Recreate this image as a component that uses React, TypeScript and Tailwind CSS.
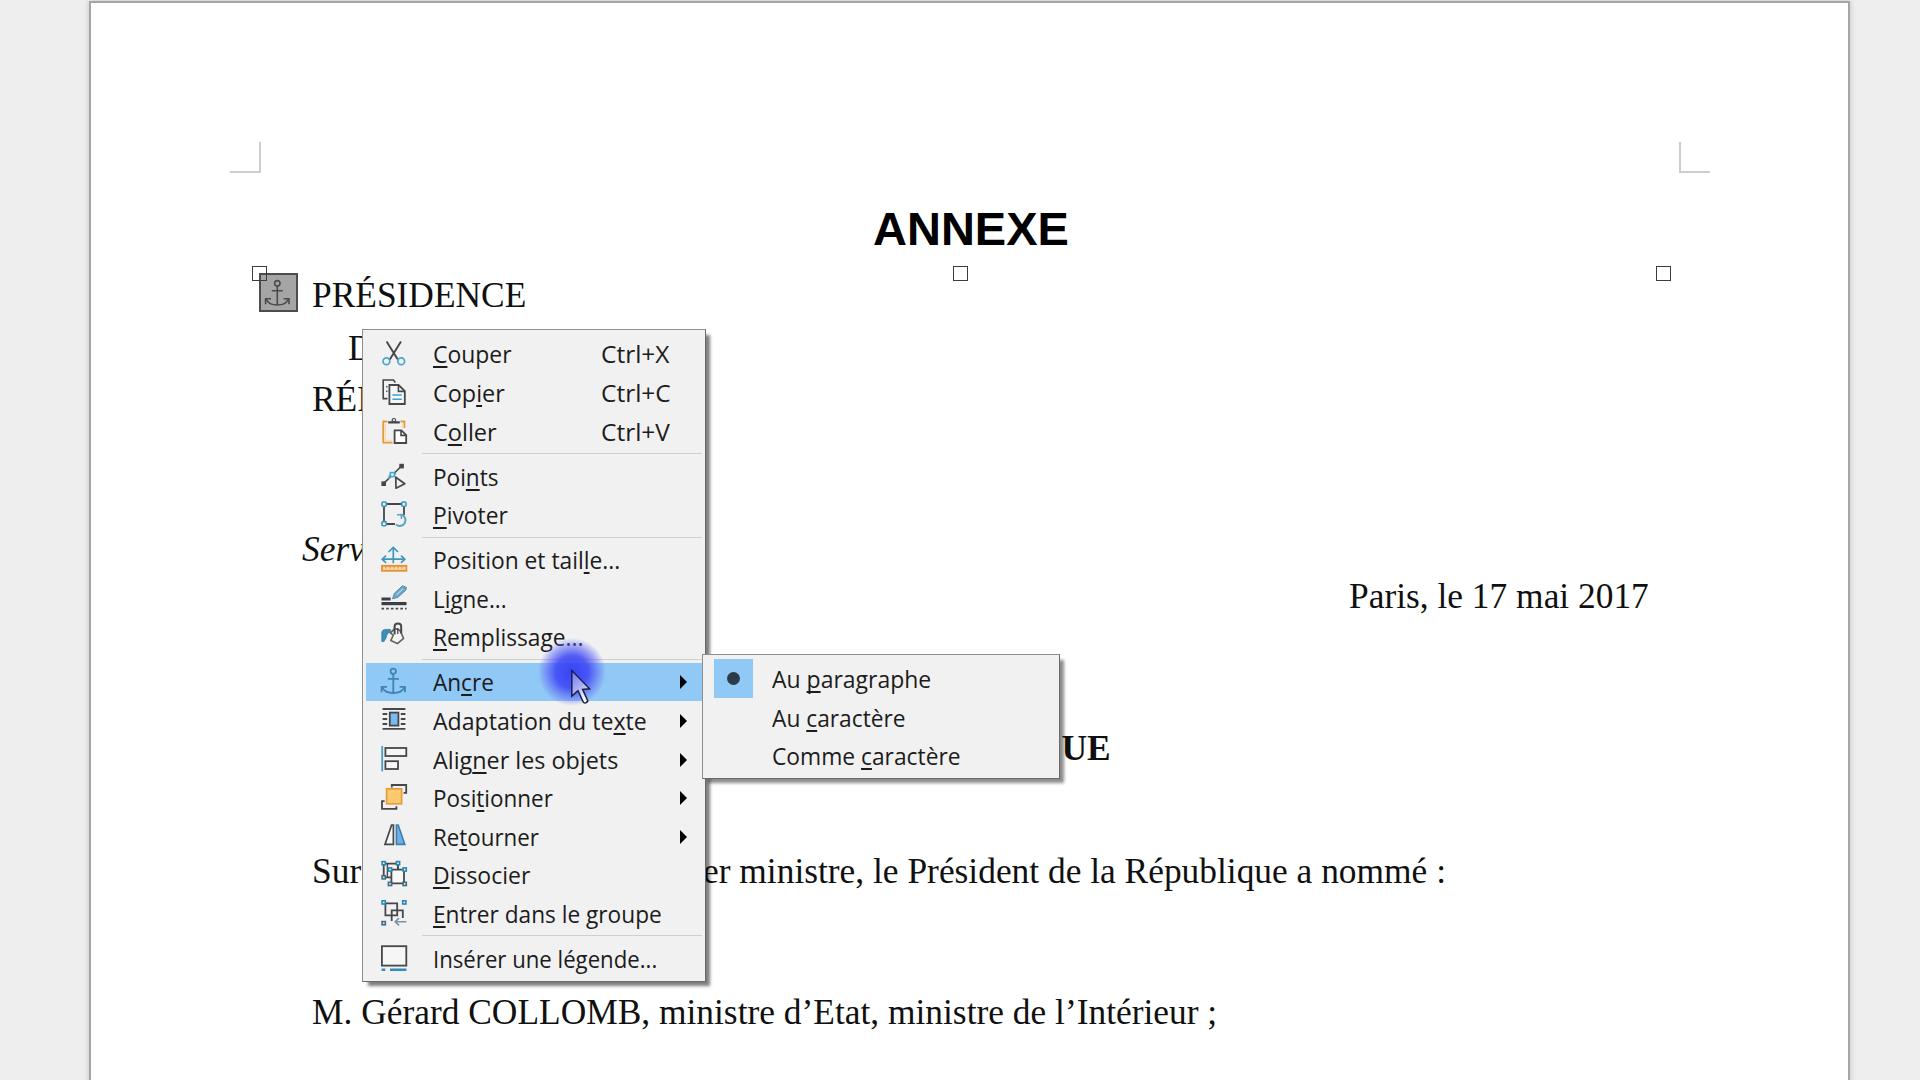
import React from "react";

const DARK = "#45474a";
const BLUE = "#2f8fb8";

function Svg({ children }: { children: React.ReactNode }) {
  return (
    <svg
      viewBox="0 0 26 26"
      className="-mt-px size-[26px] shrink-0 overflow-visible"
      fill="none"
      stroke={DARK}
      strokeWidth={1.6}
    >
      {children}
    </svg>
  );
}

function AnchorGlyph({ color, width = 1.5 }: { color: string; width?: number }) {
  return (
    <g stroke={color} strokeWidth={width} fill="none">
      <circle cx="12.3" cy="3.3" r="2.7" />
      <path d="M12.3 6V25M6.8 10.8H17.8M1.2 19.3C3 23.6 7 25 12.3 25S21.6 23.6 23.4 19.3" />
      <path d="M0.6 24.2V18.8H6M24 24.2V18.8H18.6" />
    </g>
  );
}

function Node({ x, y, color = "#2788b5" }: { x: number; y: number; color?: string }) {
  return <rect x={x - 1.6} y={y - 1.6} width="3.2" height="3.2" fill="#f1f1f1" stroke={color} />;
}

const icons = {
  cut: (
    <Svg>
      <path d="M5.6 1.5L16.8 19.6M20 1.5L8.8 19.6" strokeWidth={1.9} />
      <g stroke="#4ba6cc" strokeWidth={1.7}>
        <circle cx="5.4" cy="21.2" r="3.4" />
        <circle cx="20.2" cy="21.2" r="3.4" />
      </g>
    </Svg>
  ),
  copy: (
    <Svg>
      <path d="M6.5 19.6H2.2V1H12.5L14.3 3.4" />
      <path d="M5.8 7v1.6M5.8 11.4v1.6" strokeWidth={1.3} />
      <path d="M8.4 6H17.6L23.8 12.2V25H8.4Z" fill="#f6f6f6" strokeWidth={1.8} />
      <path d="M17.4 6V12.4H23.8" />
      <path d="M11.4 16H20.8M11.4 20.2H20.8" stroke="#35a4cf" />
    </Svg>
  ),
  paste: (
    <Svg>
      <path d="M6.5 3.5H2.2V24.6H11.5M19.5 3.5H23.4V10" stroke="#e69a3c" strokeWidth={1.8} />
      <path d="M4.2 6V22.6H11M21.6 6V10" stroke="#f9dcb0" />
      <path d="M7.2 5.6V3.2H10.6A2.4 2.4 0 0 1 15.2 3.2H18.8V5.6Z" fill={DARK} stroke="none" />
      <circle cx="12.9" cy="2.2" r="1.7" fill="#f1f1f1" strokeWidth={1.2} />
      <path d="M13.6 12.4H20.4L25.2 17.2V25H13.6Z" fill="#fff" strokeWidth={1.8} />
      <path d="M20 12.4V17.4H25.2" />
    </Svg>
  ),
  points: (
    <Svg>
      <path d="M2.5 20.6L20.6 3" />
      <path d="M8 16C8 11 11 10 15 11" stroke="#4ba6cc" />
      <rect x="9.4" y="9.6" width="4" height="4" fill="#f1f1f1" stroke="#4ba6cc" />
      <rect x="18.3" y="0.8" width="4.6" height="4.6" fill={DARK} stroke="none" />
      <rect x="0.4" y="18.4" width="4.6" height="4.6" fill={DARK} stroke="none" />
      <path d="M14.8 14.2L23.8 20.8L15 25.2Z" fill="#f1f1f1" strokeWidth={1.7} strokeLinejoin="round" />
    </Svg>
  ),
  rotate: (
    <Svg>
      <path d="M3 3H23V14M3 3V23H14" strokeWidth={1.8} />
      <g fill="#f1f1f1" stroke="#3b93b9">
        <rect x="1" y="1" width="4.2" height="4.2" rx="1" />
        <rect x="20.8" y="1" width="4.2" height="4.2" rx="1" />
        <rect x="1" y="20.6" width="4.2" height="4.2" rx="1" />
      </g>
      <path d="M15 23.4A5.7 5.7 0 1 0 20 13.6" stroke="#5aa2c4" strokeWidth={2} />
      <path d="M16 13.8H20.4V18" stroke="#5aa2c4" strokeWidth={1.5} />
    </Svg>
  ),
  position: (
    <Svg>
      <g stroke="#3d97bf" strokeWidth={1.7}>
        <path d="M12.3 2V17.2M1.4 13.2H23.6" />
        <path d="M7.6 6L12.3 1.4L17 6M5 9.6L1.2 13.2L5 16.8M20 9.6L23.8 13.2L20 16.8" />
      </g>
      <rect x="1" y="19.8" width="24.4" height="5" fill="#fbd6a0" stroke="#e4903a" strokeWidth={1.8} />
      <path d="M5 20v2.4M9 20v2.4M13 20v2.4M17 20v2.4M21 20v2.4" stroke="#e4903a" strokeWidth={1.1} />
    </Svg>
  ),
  line: (
    <Svg>
      <path d="M11.5 13.8L13.5 8.2L21.4 0.8L25.6 2.4L24.6 5.4L16.8 12.4Z" fill="#6aa5c6" stroke="#5e8ea9" strokeWidth={1} />
      <path d="M15.4 10L22 3.8" stroke="#a9d3e8" strokeWidth={1.2} />
      <path d="M0.5 14H9.6" strokeWidth={3} stroke="#3b3e47" />
      <path d="M0.5 18.6H25.5" strokeWidth={3.2} stroke="#3b3e47" />
      <path d="M0.5 23.6H25.5" strokeDasharray="2.6 2.1" strokeWidth={1.6} />
    </Svg>
  ),
  fill: (
    <Svg>
      <path d="M0.8 18.4V10C0.8 7.4 2.4 6.4 5 6.4H9.4V9.2C7 9.6 5.8 11 5.2 14.6L3 18.6Z" fill="#3c8fb5" stroke="#2d7fa6" strokeWidth={0.8} />
      <path d="M9.4 9.8L12.2 12.2L9.8 17.6L16.4 20.6L22.6 15.4L18.8 7.2L14 5.4Z" fill="#f4f4f4" stroke="#65605c" strokeLinejoin="round" />
      <path d="M13.6 11.4V3.6C13.6 -0.6 20.2 -0.6 20.2 3.6V10.2" strokeWidth={2} />
      <path d="M16.8 5V11" strokeWidth={1.3} />
    </Svg>
  ),
  anchor: (
    <Svg>
      <AnchorGlyph color="#3c86b4" width={1.8} />
    </Svg>
  ),
  wrap: (
    <Svg>
      <path d="M1.6 2H24.4M1.6 21.8H24.4" strokeWidth={1.8} />
      <path d="M1.6 7H6.2M1.6 12H6.2M1.6 17H6.2M19.8 7H24.4M19.8 12H24.4M19.8 17H24.4" strokeWidth={1.8} />
      <rect x="8.8" y="5.6" width="8.6" height="13" fill="#7db8ee" strokeWidth={1.8} />
    </Svg>
  ),
  align: (
    <Svg>
      <path d="M1.2 0V25.4" stroke="#4b9cc0" strokeWidth={1.8} />
      <rect x="4.4" y="2" width="20.9" height="8" fill="#f7f7f7" strokeWidth={1.8} />
      <rect x="4.4" y="15.2" width="12.6" height="7.8" fill="#f7f7f7" strokeWidth={1.8} />
    </Svg>
  ),
  arrange: (
    <Svg>
      <path d="M10.8 3.6V1H25.2V8.8H22.6M3.6 17.2H1V24.8H15.4V22.2" strokeWidth={1.8} />
      <rect x="5.6" y="4.8" width="15" height="15" fill="#fdc970" stroke="#e59c3c" strokeWidth={1.7} />
    </Svg>
  ),
  flip: (
    <Svg>
      <path d="M10.6 2H12.4V21.4H4Z" fill="#f7f7f7" strokeWidth={1.7} />
      <path d="M15.4 2H17.2L23.8 21.4H15.4Z" fill="#6fb0ea" stroke="#3d7fae" strokeWidth={1.6} />
    </Svg>
  ),
  ungroup: (
    <Svg>
      <path d="M2.7 2.6H17V16.3H2.7Z" strokeWidth={1.8} />
      <path d="M10.4 8.6H23V22.4H10.4Z" fill="#f8f8f8" strokeWidth={1.8} />
      <path d="M17 2.6V8M6.4 2.6V16.3" strokeWidth={1.4} />
      <Node x={2.7} y={2.2} />
      <Node x={17} y={2.2} />
      <Node x={2.7} y={16.3} color="#3f6d86" />
      <Node x={9} y={8.5} />
      <Node x={23.7} y={8.5} />
      <Node x={9} y={22.9} color="#3f6d86" />
      <Node x={23.7} y={22.9} color="#3f6d86" />
    </Svg>
  ),
  enter: (
    <Svg>
      <path d="M4.4 3.4H16.2V15.4H4.4Z" strokeWidth={1.8} />
      <path d="M10.7 21V10.3H21.8V18" strokeWidth={1.8} />
      <path d="M25.4 21.8H14.4M18 18.2L14.2 21.8L18 25.4" stroke="#7596a8" />
      <Node x={2.7} y={2.4} />
      <Node x={23.3} y={2.4} />
      <Node x={2.7} y={23.2} color="#3f6d86" />
    </Svg>
  ),
  caption: (
    <Svg>
      <rect x="0.9" y="1.2" width="24.4" height="19.4" fill="#f6f6f6" strokeWidth={1.8} />
      <path d="M0.6 24.8H4.2M9 24.8H25.4" stroke={BLUE} strokeWidth={2.4} />
    </Svg>
  ),
};

type Item = {
  id: keyof typeof icons;
  parts: [string, string, string];
  fit: string;
  shortcut?: string;
  more?: boolean;
  active?: boolean;
};

const groups: Item[][] = [
  [
    { id: "cut", parts: ["", "C", "ouper"], fit: "scale-x-[0.955]", shortcut: "Ctrl+X" },
    { id: "copy", parts: ["Cop", "i", "er"], fit: "scale-x-[0.975]", shortcut: "Ctrl+C" },
    { id: "paste", parts: ["C", "o", "ller"], fit: "scale-x-[0.98]", shortcut: "Ctrl+V" },
  ],
  [
    { id: "points", parts: ["Poi", "n", "ts"], fit: "scale-x-[0.94]" },
    { id: "rotate", parts: ["", "P", "ivoter"], fit: "scale-x-[0.95]" },
  ],
  [
    { id: "position", parts: ["Position et tail", "l", "e..."], fit: "scale-x-[0.95]" },
    { id: "line", parts: ["L", "i", "gne..."], fit: "scale-x-[0.935]" },
    { id: "fill", parts: ["", "R", "emplissage..."], fit: "scale-x-[0.947]" },
  ],
  [
    { id: "anchor", parts: ["An", "c", "re"], fit: "scale-x-[0.94]", more: true, active: true },
    { id: "wrap", parts: ["Adaptation du te", "x", "te"], fit: "scale-x-[0.963]", more: true },
    { id: "align", parts: ["Alig", "n", "er les objets"], fit: "scale-x-[0.973]", more: true },
    { id: "arrange", parts: ["Posi", "t", "ionner"], fit: "scale-x-[0.935]", more: true },
    { id: "flip", parts: ["Re", "t", "ourner"], fit: "scale-x-[0.93]", more: true },
    { id: "ungroup", parts: ["", "D", "issocier"], fit: "scale-x-[0.957]" },
    { id: "enter", parts: ["", "E", "ntrer dans le groupe"], fit: "scale-x-[0.944]" },
  ],
  [{ id: "caption", parts: ["Insérer une légende...", "", ""], fit: "scale-x-[0.924]" }],
];

const anchorChoices: { parts: [string, string, string]; fit: string; checked?: boolean }[] = [
  { parts: ["Au ", "p", "aragraphe"], fit: "scale-x-[0.957]", checked: true },
  { parts: ["Au ", "c", "aractère"], fit: "scale-x-[0.948]" },
  { parts: ["Comme ", "c", "aractère"], fit: "scale-x-[0.95]" },
];

function Label({ parts, fit }: { parts: [string, string, string]; fit: string }) {
  return (
    <span className={`origin-left whitespace-pre ${fit}`}>
      {parts[0]}
      <span className="underline decoration-2 underline-offset-[3px] [text-decoration-skip-ink:none]">
        {parts[1]}
      </span>
      {parts[2]}
    </span>
  );
}

function ContextMenu() {
  return (
    <div className="absolute left-[362px] top-[329px] flex h-[653px] w-[344px] flex-col border border-[#8f8f8f] border-b-[#6a6a6a] border-r-[#6a6a6a] bg-[#f1f1f1] px-[3px] pt-[4.6px] shadow-[5px_5px_3px_-1px_rgba(0,0,0,0.5)]">
      {groups.map((items, g) => (
        <React.Fragment key={g}>
          {g > 0 && (
            <div className="flex h-[6.4px] shrink-0 items-center pl-14">
              <div className="h-px w-full bg-[#cfcfcf]" />
            </div>
          )}
          {items.map((item) => (
            <div
              key={item.id}
              className={`flex h-[38.6px] shrink-0 items-center pl-[15px] ${item.active ? "bg-[#90c8f6]" : ""}`}
            >
              {icons[item.id]}
              <div className="ml-[26px] flex w-[170px] shrink-0 pt-px">
                <Label parts={item.parts} fit={item.fit} />
              </div>
              {item.shortcut && (
                <span className="-ml-[2px] origin-left scale-x-[1.02] whitespace-nowrap pt-px">
                  {item.shortcut}
                </span>
              )}
              {item.more && (
                <svg viewBox="0 0 7 14" className="ml-[77px] mt-px h-3.5 w-[7px] shrink-0 fill-black">
                  <path d="M0 0L7 7L0 14Z" />
                </svg>
              )}
            </div>
          ))}
        </React.Fragment>
      ))}
    </div>
  );
}

function AnchorMenu() {
  return (
    <div className="absolute left-[702px] top-[654px] flex h-[125px] w-[358px] flex-col border border-[#8f8f8f] border-b-[#6a6a6a] border-r-[#6a6a6a] bg-[#f1f1f1] pl-[11px] pt-[4px] shadow-[5px_5px_3px_-1px_rgba(0,0,0,0.45)]">
      {anchorChoices.map((choice) => (
        <div key={choice.parts.join("")} className="flex h-[38.6px] shrink-0 items-center">
          <div
            className={`flex size-[38.6px] shrink-0 items-center justify-center ${choice.checked ? "bg-[#90c8f6]" : ""}`}
          >
            {choice.checked && <div className="size-[13px] rounded-full bg-[#2c3a49]" />}
          </div>
          <div className="ml-[19.8px] flex pt-[2px]">
            <Label parts={choice.parts} fit={choice.fit} />
          </div>
        </div>
      ))}
    </div>
  );
}

function Handle({ place }: { place: string }) {
  return <div className={`absolute top-[266px] size-[15px] border-[1.5px] border-[#3c3c3c] ${place}`} />;
}

export default function App() {
  return (
    <div className="relative h-[1080px] w-[1920px] overflow-hidden bg-[#eeeeee]">
      <div className="flex h-full justify-center overflow-hidden pl-[19px] pt-px">
        <main className="flex h-[1100px] w-[1761px] shrink-0 flex-col border-2 border-[#a6a6a6] bg-white pl-[221px] font-['Liberation_Serif',serif] text-[35.4px] leading-[40px] text-[#101010] shadow-[0_0_6px_rgba(0,0,0,0.2)]">
          <h1 className="mt-[202px] pl-[561px] font-['Liberation_Sans',sans-serif] text-[47px] font-bold leading-[48px] text-black">
            ANNEXE
          </h1>
          <p className="mt-[22px]">PRÉSIDENCE</p>
          <p className="mt-[13px] pl-[36px]">D</p>
          <p className="mt-[11px]">RÉP</p>
          <p className="-ml-[10px] mt-[110px] italic">Serv</p>
          <p className="mt-[7px] pl-[1037px]">Paris, le 17 mai 2017</p>
          <p className="mt-[112px] pl-[749.5px] font-bold">UE</p>
          <p className="mt-[83px] flex whitespace-nowrap">
            <span className="w-[391px]">Sur</span>
            <span>er ministre, le Président de la République a nommé :</span>
          </p>
          <p className="mt-[101px] whitespace-nowrap">
            M. Gérard COLLOMB, ministre d’Etat, ministre de l’Intérieur ;
          </p>
        </main>
      </div>

      <div className="absolute left-[230px] top-[142px] size-[31px] border-b-2 border-r-2 border-[#cdcdcd]" />
      <div className="absolute left-[1679px] top-[142px] size-[31px] border-b-2 border-l-2 border-[#cdcdcd]" />

      <div className="absolute left-[259px] top-[273px] flex size-[39px] items-center justify-center border-2 border-[#4c4c4c] bg-[#a5a5a5]">
        <svg viewBox="0 0 25 26" className="-ml-0.5 h-[26px] w-[25px] overflow-visible">
          <AnchorGlyph color="#4a4a4a" width={1.6} />
        </svg>
      </div>
      <Handle place="left-[252px]" />
      <Handle place="left-[953px]" />
      <Handle place="left-[1656px]" />

      <div className="font-['Open_Sans','Noto_Sans',sans-serif] text-[24px] leading-[38px] text-[#1c1c1c]">
        <ContextMenu />
        <div className="absolute left-[538px] top-[638px] size-[68px] rounded-full bg-[radial-gradient(circle_closest-side,rgba(50,60,245,0.95)_0%,rgba(60,70,245,0.88)_48%,rgba(95,105,245,0.55)_76%,rgba(150,155,245,0)_100%)]" />
        <AnchorMenu />
        <svg viewBox="0 0 20 36" className="absolute left-[571px] top-[669px] h-9 w-5 overflow-visible">
          <defs>
            <linearGradient id="pointer" x1="0" y1="0" x2="0.4" y2="1">
              <stop offset="0" stopColor="#6f74f5" />
              <stop offset="0.6" stopColor="#a9b0f4" />
              <stop offset="1" stopColor="#ffffff" />
            </linearGradient>
          </defs>
          <path
            d="M0.8 1.5V27L7 21.6L12.4 33.2Q14.6 35.2 16.8 32L11.6 20.4L18.6 19.8Z"
            fill="url(#pointer)"
            stroke="#1d1f4a"
            strokeWidth="1.5"
          />
        </svg>
      </div>
    </div>
  );
}
